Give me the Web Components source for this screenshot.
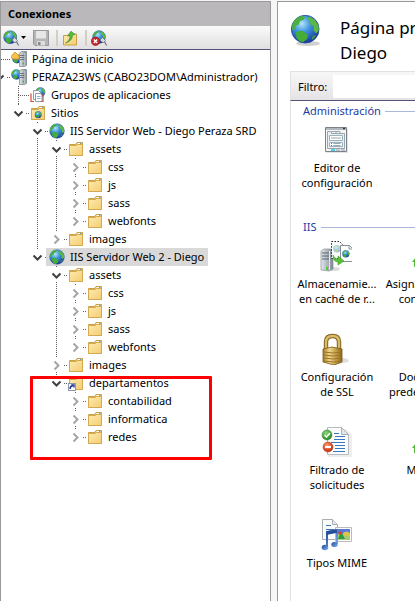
<!DOCTYPE html>
<html lang="es">
<head>
<meta charset="utf-8">
<title>Administrador de IIS</title>
<style>
html, body { height: 100%; }
body { margin: 0; overflow: hidden; background: #f7f6f7; color: #000; font: 11px/18px "Noto Sans", "Open Sans", sans-serif; }
</style>
</head>
<body>
<iis-manager>
  <connections-panel slot="left" heading="Conexiones">
    <tree-item icon="home" label="Página de inicio"></tree-item>
    <tree-item icon="server" label="PERAZA23WS (CABO23DOM\Administrador)" open>
      <tree-item icon="pools" label="Grupos de aplicaciones"></tree-item>
      <tree-item icon="sites" label="Sitios" open>
        <tree-item icon="globe" label="IIS Servidor Web - Diego Peraza SRD" open>
          <tree-item icon="folder" label="assets" open>
            <tree-item icon="folder" label="css" closed></tree-item>
            <tree-item icon="folder" label="js" closed></tree-item>
            <tree-item icon="folder" label="sass" closed></tree-item>
            <tree-item icon="folder" label="webfonts" closed></tree-item>
          </tree-item>
          <tree-item icon="folder" label="images" closed></tree-item>
        </tree-item>
        <tree-item icon="globe" label="IIS Servidor Web 2 - Diego" open selected>
          <tree-item icon="folder" label="assets" open>
            <tree-item icon="folder" label="css" closed></tree-item>
            <tree-item icon="folder" label="js" closed></tree-item>
            <tree-item icon="folder" label="sass" closed></tree-item>
            <tree-item icon="folder" label="webfonts" closed></tree-item>
          </tree-item>
          <tree-item icon="folder" label="images" closed></tree-item>
          <tree-item icon="virtual" label="departamentos" open marked>
            <tree-item icon="folder" label="contabilidad" closed></tree-item>
            <tree-item icon="folder" label="informatica" closed></tree-item>
            <tree-item icon="folder" label="redes" closed></tree-item>
          </tree-item>
        </tree-item>
      </tree-item>
    </tree-item>
  </connections-panel>
  <feature-pane slot="right">
    <span slot="title">Página principal de<br>Diego</span>
    <feature-section heading="Administración">
      <feature-item icon="editor">Editor de<br>configuración</feature-item>
    </feature-section>
    <feature-section heading="IIS">
      <feature-item icon="cache">Almacenamie...<br>en caché de r...</feature-item>
      <feature-item icon="handlers">Asignaciones d...<br>controlador</feature-item>
      <feature-item icon="lock">Configuración<br>de SSL</feature-item>
      <feature-item>Documento<br>predetermina...</feature-item>
      <feature-item icon="filter">Filtrado de<br>solicitudes</feature-item>
      <feature-item icon="handlers">Módulos</feature-item>
      <feature-item icon="mime">Tipos MIME</feature-item>
    </feature-section>
  </feature-pane>
</iis-manager>

<script>
const DEFS = `<defs>
<radialGradient id="sea" cx=".38" cy=".3" r=".75"><stop offset="0" stop-color="#b5e4fb"/><stop offset=".4" stop-color="#3f97dd"/><stop offset="1" stop-color="#17309a"/></radialGradient>
<linearGradient id="fold" x1="0" y1="0" x2="1" y2="1"><stop offset="0" stop-color="#ffeab0"/><stop offset="1" stop-color="#f3cd72"/></linearGradient>
<linearGradient id="steel"><stop offset="0" stop-color="#e6e9ec"/><stop offset="1" stop-color="#7c8791"/></linearGradient>
<linearGradient id="gold"><stop offset="0" stop-color="#a8822e"/><stop offset=".35" stop-color="#f0d588"/><stop offset="1" stop-color="#8f6716"/></linearGradient>
<linearGradient id="note" x1="0" y1="0" x2="1" y2="1"><stop offset="0" stop-color="#1d4a9d"/><stop offset="1" stop-color="#80b4ee"/></linearGradient>
<radialGradient id="ok" cx=".4" cy=".3" r=".7"><stop offset="0" stop-color="#8ed77e"/><stop offset="1" stop-color="#258a22"/></radialGradient>
<radialGradient id="no" cx=".4" cy=".3" r=".7"><stop offset="0" stop-color="#ff9468"/><stop offset="1" stop-color="#c92a06"/></radialGradient></defs>`;

/* Globe on a 16-unit grid, placed anywhere with a transform. */
const GLOBE = `<circle cx="8" cy="8" r="7.3" fill="url(#sea)" stroke="#1c3f91" stroke-width=".4"/>
<path d="M1.200 5.500C2 3 4 1.300 6.500 1L8 1.700 7 3.200 5.300 3.700 4.600 5.600 3 6.200 2.600 8 1.100 8.300z" fill="#4cb03f"/>
<path d="M3.200 9.300L6.500 8.800 9.500 11 9 13 7 14.900 5 14.400 3.400 12.500z" fill="#43ad35"/>
<path d="M10 1.200L13 3 15 6 15.200 8.500 13.800 10.300 12.300 8.600 12.500 6.500 10.800 5.600 10.500 3.800 9.300 2.600z" fill="#5cb845"/>
<path d="M12 11.500L13.800 11 12.600 13 11.400 13.700z" fill="#3b9e37"/>`;
const FOLDER = `<path d="M1.500 3.500h6l1.500-2h5.500v13h-13z" fill="#e8bd58" stroke="#c9a048"/><path d="M9.500 2.500h4" stroke="#fff"/><path d="M12 2.500h1.500" stroke="#58a5dc"/><path d="M1.500 4.500h7l1-1h5v11h-13z" fill="url(#fold)" stroke="#d3aa50"/>`;
const TOWER = `<path d="M8.500 2l2-1.500h5v14l-2 1h-5z" fill="url(#steel)" stroke="#75818c" stroke-width=".7"/><path d="M9 4.500h5M9 6.500h5M9 8.500h5" stroke="#53616c" stroke-width=".8"/><path d="M13.800 2v13" stroke="#eef1f3" stroke-width=".6"/><path d="M11.500 12.500h1.500" stroke="#38b53b" stroke-width="1.500"/>`;
const PLUG = `<path d="M9 10l2.500-2.500 3 3-2.500 2.500z" fill="#d5dbe0" stroke="#68757f" stroke-width=".8"/><path d="M13 12q1.500 0 1.500 1.500t1.500 1.500" fill="none" stroke="#77838d" stroke-width="1.300"/>`;

const ICONS = {
  globe: [16, GLOBE],
  bigglobe: [32, `<ellipse cx="18" cy="28.500" rx="12" ry="2.500" fill="#777" opacity=".35"/><g transform="translate(0 -1) scale(1.900)">${GLOBE}</g>`],
  folder: [16, FOLDER],
  virtual: [16, FOLDER + `<rect x=".5" y="8.500" width="7" height="7" fill="#fff" stroke="#8b97ad"/><path d="M2 14q0-3 3-3.500M3.300 9.900h2.700v2.700" fill="none" stroke="#22329b" stroke-width="1.400"/>`],
  sites: [16, FOLDER + `<g transform="translate(4.500 6) scale(.46)">${GLOBE}</g>`],
  server: [16, `<g transform="translate(0 0) scale(.68)">${GLOBE}</g>` + TOWER],
  home: [16, `<g transform="translate(1 3) scale(.6)">${GLOBE}</g>` + TOWER + `<path d="M0 5.500L4 1l4 4v3H1.500z" fill="#f7c34c" stroke="#d08a17" stroke-width=".8"/><path d="M7.500 0l1 2 2 .5-2 1.200" fill="#ffab20"/>`],
  pools: [16, `<g transform="translate(5 0) scale(.66)">${GLOBE}</g><path d="M3.500 3.500h5l2 2v7h-7z" fill="#f7f9fc" stroke="#7a8794" stroke-width=".8"/><path d="M1 6.500v8h3M13 7v7.500h-3" fill="none" stroke="#d64a3a" stroke-width="1.200"/><path d="M5.500 6.500h5l1.500 1.500v6.500H5.500z" fill="#fff" stroke="#7a8794" stroke-width=".8"/><path d="M7 9.500h3.500M7 11.500h3.500" stroke="#8cb4df"/>`],
  connect: [16, `<g transform="scale(.9)">${GLOBE}</g>` + PLUG],
  disconnect: [16, `<g transform="translate(1 0) scale(.88)">${GLOBE}</g>` + PLUG + `<circle cx="4.500" cy="11.300" r="4.200" fill="#c92626" stroke="#981313" stroke-width=".6"/><path d="M2.800 9.600l3.400 3.400M6.200 9.600l-3.400 3.400" stroke="#fff" stroke-width="1.400"/>`],
  save: [16, `<path d="M.5.500h15v15H2L.5 14z" fill="#b5b5b5" stroke="#989898"/><path d="M3 1h10v7.500H3z" fill="#e7e7e7"/><path d="M4 11h8v4.500H4z" fill="#dedede"/><path d="M5 12h2.500v3H5z" fill="#888"/>`],
  up: [16, `<path d="M1.500 5.500h7l1-1.500h5v11h-13z" fill="url(#fold)" stroke="#c49a37" stroke-width=".9"/><path d="M3.500 13Q8 11 8 5.500L5.500 6 9 1.200 13 4.500 10.500 5Q10.500 11 3.500 13z" fill="#55bd3d" stroke="#31862a" stroke-width=".6"/>`],
  editor: [32, `<path d="M6 5h22v24H6z" fill="#bbb" opacity=".4"/><path d="M5.500 3.500h21v24h-21z" fill="#f4f6f7" stroke="#7a8289"/><path d="M6 5h20" stroke="#9ba3aa" stroke-width="1.500"/><path d="M23 4.500h2" stroke="#333" stroke-width="1.500"/><path d="M7.500 7.500h4v2h13v15h-17z" fill="#eceff1" stroke="#9aa5ae"/><path d="M12 7.500h4v2M16 7.500h4v2" fill="none" stroke="#9aa5ae"/><path d="M9.500 11.500h13v5h-13zM9.500 18.500h13v4h-13z" fill="#fff" stroke="#9ab3c1"/><path d="M11 14h10M13.500 19.500h7M13.500 21.500h7" stroke="#a0a6ab" stroke-width="1.200"/><path d="M11 19.500h1M11 21.500h1" stroke="#2a8ea3"/><path d="M11 26h4" stroke="#15c6ef" stroke-width="1.500"/><path d="M16 26h4M21 26h4" stroke="#b0b8be" stroke-width="1.500"/>`],
  cache: [32, `<ellipse cx="13" cy="29" rx="7" ry="2" fill="#888" opacity=".3"/><path d="M1 11l3-2h9v20l-4 2-8-1z" fill="url(#steel)" stroke="#8a949c" stroke-width=".7"/><path d="M9.500 11v19" stroke="#e4e8ea"/><path d="M2 13h7M2 16h7M2 19h7" stroke="#59656f"/><path d="M6 28.500h2" stroke="#43d631" stroke-width="3"/><path d="M11.500 1.500h8l3 3v14h-11z" fill="#fafafa" stroke="#222" stroke-dasharray="1.500 1.500"/><g transform="translate(13 5) scale(.48)" opacity=".4">${GLOBE}</g><path d="M20.500 5.500h9l3 3v13h-12z" fill="#fff" stroke="#879099"/><path d="M29 6v3h3" fill="none" stroke="#879099"/><g transform="translate(22 10) scale(.48)">${GLOBE}</g><path d="M13 15q1 4 5 4v-3l6 5-6 4v-3q-5 0-5-7z" fill="#58bf36" stroke="#3c9a29" stroke-width=".6"/>`],
  handlers: [32, `<path d="M0 22l4-5 4 5H6v5H2v-5z" fill="#54b83a"/>`],
  lock: [32, `<ellipse cx="19" cy="27.500" rx="10" ry="3" fill="#888" opacity=".28"/><path d="M6 16V9q0-6 6.500-6T19 9v7" fill="none" stroke="#81611d" stroke-width="4.400"/><path d="M6 16V9q0-6 6.500-6T19 9v7" fill="none" stroke="#d9ba66" stroke-width="2.400"/><path d="M3 16l9-2 10 2v13l-8 3-11-3z" fill="url(#gold)" stroke="#78570f" stroke-width=".8"/><path d="M3.500 19l10 1 8-1M3.500 22l10 1 8-1M3.500 25l10 1 8-1M3.500 28l10 1 8-1" fill="none" stroke="#9b7523"/>`],
  filter: [32, `<path d="M8 3h18l6 6v22H8z" fill="#aaa" opacity=".2"/><path d="M7.500 1.500h14l7 7v20h-21z" fill="#fcfcfd" stroke="#b8bcc0"/><path d="M21.500 1.500v7h7z" fill="#e4e7ea" stroke="#aab0b5"/><path d="M14 7.500h5M15 10.500h10M14 13.500h11M11 16.500h14M15 19.500h10M15 22.500h10M13 25.500h12" stroke="#3578bf"/><circle cx="7" cy="9" r="5" fill="url(#ok)" stroke="#2d7b2b" stroke-width=".5"/><path d="M4.500 9l2 2 3.500-4" fill="none" stroke="#fff" stroke-width="1.500"/><circle cx="8" cy="21" r="5" fill="url(#no)" stroke="#a93014" stroke-width=".5"/><path d="M5 21h6" stroke="#fff" stroke-width="2.200"/>`],
  mime: [32, `<path d="M2.500.500h10l5 5v15h-15z" fill="#fafbfc" stroke="#a8aeb3"/><path d="M12.500.500v5h5" fill="#e5e7e9" stroke="#a8aeb3"/><path d="M6 6.500h5M6 10.500h8M6 14.500h5" stroke="#3f75b8"/><path d="M15.500 8.500h16v14h-16z" fill="#fff" stroke="#bbb"/><path d="M17 10h13v5H17z" fill="#5678d8"/><path d="M17 15h13v6H17z" fill="#a9c979"/><path d="M23 14q3-3 7 0v3h-7z" fill="#d9c44e"/><path d="M18 20l3-8 4 8z" fill="#2d9c42"/><circle cx="20" cy="14" r="1.700" fill="#df4129"/><path d="M7 28V13l10-2v14" fill="none" stroke="url(#note)" stroke-width="2"/><path d="M7 14l10-2" stroke="#244d9c" stroke-width="3.500"/><ellipse cx="5" cy="28.500" rx="3.300" ry="2.700" fill="url(#note)"/><ellipse cx="14.500" cy="25.500" rx="3.200" ry="2.600" fill="url(#note)"/>`]
};

class IisIcon extends HTMLElement {
  constructor() { super(); this.attachShadow({ mode: 'open' }); }
  connectedCallback() {
    const [size, art] = ICONS[this.getAttribute('name')] || [32, ''];
    this.shadowRoot.innerHTML = `<style>:host{display:block;flex:none}svg{display:block}</style>
      <svg width="${size}" height="${size}" viewBox="0 0 ${size} ${size}" aria-hidden="true">${DEFS}${art}</svg>`;
  }
}

class TreeItem extends HTMLElement {
  constructor() { super(); this.attachShadow({ mode: 'open' }); }
  get isLast() { return !this.nextElementSibling; }
  connectedCallback() {
    const chain = [];
    for (let p = this.parentElement; p && p.localName === 'tree-item'; p = p.parentElement) chain.unshift(p);
    const open = this.hasAttribute('open'), expandable = open || this.hasAttribute('closed');
    const vline = (a, b) => `<path d="M9.500 ${a}V${b}" stroke="#5d5d5d" stroke-dasharray="1 1"/>`;
    const guides = chain.map(p => `<svg class="cell" width="19" height="18">${p.isLast ? '' : vline(0, 18)}</svg>`).join('');
    const top = chain.length ? (expandable ? vline(0, 1) : vline(0, 9)) : '';
    const bottom = this.isLast ? '' : (expandable ? vline(16, 18) : vline(9, 18));
    const dash = `<path d="M${expandable ? 17 : 11} 9.500H21" stroke="#5d5d5d" stroke-dasharray="1 1"/>`;
    const arrow = !expandable ? '' : `<button tabindex="-1" aria-label="${open ? 'Contraer' : 'Expandir'}"><svg width="11" height="11">${open
      ? '<path d="M1.500 3.500l4 4 4-4" fill="none" stroke="#404040" stroke-width="2"/>'
      : '<path d="M3.500 1.500l4 4-4 4" fill="none" stroke="#a6a6a6" stroke-width="2"/>'}</svg></button>`;
    this.setAttribute('role', 'treeitem');
    this.shadowRoot.innerHTML = `<style>
      :host{display:block;position:relative}
      .row{display:flex;height:18px;margin-left:-11px;white-space:nowrap}
      .cell{flex:none;display:block}
      .own{flex:none;width:18px;display:grid;align-items:center;justify-items:center}
      .own>*{grid-area:1/1}
      .own>svg{width:18px;height:18px;overflow:visible}
      button{border:0;padding:0;background:none;width:11px;height:11px;margin-left:1px}
      button svg{display:block}
      .label{display:flex;align-items:center;gap:5px;padding:0 4px 0 3px;z-index:1}
      :host([selected]) .label{background:#d9d9d9}
      :host([marked])::after{content:"";position:absolute;left:29px;top:2px;width:176px;bottom:-14px;border:3px solid #f00;border-radius:1px;z-index:2}
      </style>
      <div class="row">${guides}<span class="own"><svg>${top}${bottom}${dash}</svg>${arrow}</span>
      <span class="label"><iis-icon name="${this.getAttribute('icon')}"></iis-icon><span>${this.getAttribute('label')}</span></span></div>
      <slot></slot>`;
  }
}

class ConnectionsPanel extends HTMLElement {
  constructor() { super(); this.attachShadow({ mode: 'open' }); }
  connectedCallback() {
    this.shadowRoot.innerHTML = `<style>
      :host{display:flex;flex-direction:column;box-sizing:border-box;border:solid #999;border-width:1px 1px 0;background:#fff;overflow:hidden}
      h2{margin:0;padding:0 7px;background:#bab8ba;font-size:11px;line-height:24px;font-weight:700}
      .bar{display:flex;align-items:center;height:23px;padding-left:2px;background:linear-gradient(#fafafa,#e1dfe1);border-bottom:1px solid #53537a}
      button{display:flex;align-items:center;gap:2px;border:0;padding:0;background:none}
      .drop{margin-right:6px}
      hr{flex:none;width:2px;height:16px;margin:0 4px 0 7px;border:0;background:#d2cfc2}
      .tree{flex:1}
      </style>
      <h2>${this.getAttribute('heading')}</h2>
      <div class="bar" role="toolbar">
        <button class="drop" aria-label="Conectar"><iis-icon name="connect"></iis-icon><svg width="6" height="4"><path d="M0 0h5L2.500 3z"/></svg></button>
        <button aria-label="Guardar" disabled><iis-icon name="save"></iis-icon></button><hr>
        <button aria-label="Subir"><iis-icon name="up"></iis-icon></button><hr>
        <button aria-label="Desconectar"><iis-icon name="disconnect"></iis-icon></button>
      </div>
      <div class="tree" role="tree"><slot></slot></div>`;
  }
}

class FeatureItem extends HTMLElement {
  constructor() { super(); this.attachShadow({ mode: 'open' }); }
  connectedCallback() {
    this.shadowRoot.innerHTML = `<style>
      :host{display:flex;flex-direction:column;align-items:center;gap:4px;height:93px;line-height:15px;text-align:center;white-space:nowrap}
      .pic{width:34px;height:32px}</style>
      <div class="pic"><iis-icon name="${this.getAttribute('icon') || ''}"></iis-icon></div><div><slot></slot></div>`;
  }
}

class FeatureSection extends HTMLElement {
  constructor() { super(); this.attachShadow({ mode: 'open' }); }
  connectedCallback() {
    this.shadowRoot.innerHTML = `<style>
      :host{display:block}
      h3{display:flex;align-items:center;gap:4px;margin:0;padding-left:12px;height:20px;font-size:11px;font-weight:400;color:#1e3aa4}
      h3::after{content:"";flex:1;height:1px;background:#a9b8dc}
      .grid{display:grid;grid-template-columns:repeat(2,86px);column-gap:6px;padding:3px 0 0 3px}</style>
      <h3>${this.getAttribute('heading')}</h3><div class="grid"><slot></slot></div>`;
  }
}

class FeaturePane extends HTMLElement {
  constructor() { super(); this.attachShadow({ mode: 'open' }); }
  connectedCallback() {
    this.shadowRoot.innerHTML = `<style>
      :host{display:flex;flex-direction:column;box-sizing:border-box;border:solid #999;border-width:1px 0 0 1px;background:#fff;padding-left:12px;overflow:hidden}
      header{flex:none;display:flex;gap:18px;height:69px;box-sizing:border-box;padding-top:13px}
      h1{margin:0;font-size:17px;line-height:25px;font-weight:400;white-space:nowrap}
      .filter{flex:none;box-sizing:border-box;display:flex;height:30px;border:solid #e3e2e3;border-width:1px 0 0 1px;border-bottom:1px solid #53537a;background:linear-gradient(#f8f7f8,#e5e3e5);padding-top:3px}
      label{padding:0 6px 0 7px;line-height:24px}
      input{flex:1;min-width:0;border:0;padding:0 4px;background:#fff;font:inherit;margin-bottom:2px}
      .body{flex:1;border-left:1px solid #e0e0e0}
      </style>
      <header><iis-icon name="bigglobe"></iis-icon><h1><slot name="title"></slot></h1></header>
      <div class="filter"><label for="f">Filtro:</label><input id="f" type="text"></div>
      <div class="body"><slot></slot></div>`;
  }
}

class IisManager extends HTMLElement {
  constructor() { super(); this.attachShadow({ mode: 'open' }); }
  connectedCallback() {
    this.shadowRoot.innerHTML = `<style>
      :host{display:grid;grid-template-columns:271px minmax(0,1fr);column-gap:6px;height:100%;box-sizing:border-box;padding-top:1px}
      ::slotted(*){min-height:0}</style>
      <slot name="left"></slot><slot name="right"></slot>`;
  }
}

customElements.define('iis-icon', IisIcon);
customElements.define('tree-item', TreeItem);
customElements.define('connections-panel', ConnectionsPanel);
customElements.define('feature-item', FeatureItem);
customElements.define('feature-section', FeatureSection);
customElements.define('feature-pane', FeaturePane);
customElements.define('iis-manager', IisManager);
</script>
</body>
</html>
